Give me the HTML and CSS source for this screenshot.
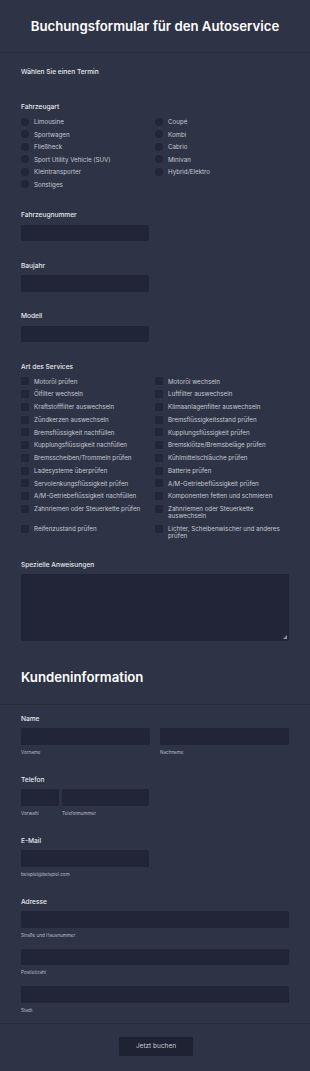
FILE: index.html
```html
<!DOCTYPE html>
<html lang="de">
<head>
<meta charset="utf-8">
<title>Buchungsformular für den Autoservice</title>
<link rel="stylesheet" href="styles.css">
</head>
<body>
<header class="page-header">
  <h1 class="title">Buchungsformular für den Autoservice</h1>
</header>
<main class="form">
  <section class="field first">
    <div class="label">Wählen Sie einen Termin</div>
  </section>

  <section class="field gap-lg">
    <div class="label">Fahrzeugart</div>
    <div class="choices">
      <label class="choice"><span class="radio"></span><span>Limousine</span></label>
      <label class="choice"><span class="radio"></span><span>Coupé</span></label>
      <label class="choice"><span class="radio"></span><span>Sportwagen</span></label>
      <label class="choice"><span class="radio"></span><span>Kombi</span></label>
      <label class="choice"><span class="radio"></span><span>Fließheck</span></label>
      <label class="choice"><span class="radio"></span><span>Cabrio</span></label>
      <label class="choice"><span class="radio"></span><span>Sport Utility Vehicle (SUV)</span></label>
      <label class="choice"><span class="radio"></span><span>Minivan</span></label>
      <label class="choice"><span class="radio"></span><span>Kleintransporter</span></label>
      <label class="choice"><span class="radio"></span><span>Hybrid/Elektro</span></label>
      <label class="choice"><span class="radio"></span><span>Sonstiges</span></label>
    </div>
  </section>

  <section class="field gap-md">
    <div class="label">Fahrzeugnummer</div>
    <div class="input half"></div>
  </section>

  <section class="field gap-md">
    <div class="label">Baujahr</div>
    <div class="input half"></div>
  </section>

  <section class="field gap-md">
    <div class="label">Modell</div>
    <div class="input half"></div>
  </section>

  <section class="field gap-md">
    <div class="label">Art des Services</div>
    <div class="choices checks">
      <label class="choice"><span class="check"></span><span>Motoröl prüfen</span></label>
      <label class="choice"><span class="check"></span><span>Motoröl wechseln</span></label>
      <label class="choice"><span class="check"></span><span>Ölfilter wechseln</span></label>
      <label class="choice"><span class="check"></span><span>Luftfilter auswechseln</span></label>
      <label class="choice"><span class="check"></span><span>Kraftstofffilter auswechseln</span></label>
      <label class="choice"><span class="check"></span><span>Klimaanlagenfilter auswechseln</span></label>
      <label class="choice"><span class="check"></span><span>Zündkerzen auswechseln</span></label>
      <label class="choice"><span class="check"></span><span>Bremsflüssigkeitsstand prüfen</span></label>
      <label class="choice"><span class="check"></span><span>Bremsflüssigkeit nachfüllen</span></label>
      <label class="choice"><span class="check"></span><span>Kupplungsflüssigkeit prüfen</span></label>
      <label class="choice"><span class="check"></span><span>Kupplungsflüssigkeit nachfüllen</span></label>
      <label class="choice"><span class="check"></span><span>Bremsklötze/Bremsbeläge prüfen</span></label>
      <label class="choice"><span class="check"></span><span>Bremsscheiben/Trommeln prüfen</span></label>
      <label class="choice"><span class="check"></span><span>Kühlmittelschläuche prüfen</span></label>
      <label class="choice"><span class="check"></span><span>Ladesysteme überprüfen</span></label>
      <label class="choice"><span class="check"></span><span>Batterie prüfen</span></label>
      <label class="choice"><span class="check"></span><span>Servolenkungsflüssigkeit prüfen</span></label>
      <label class="choice"><span class="check"></span><span>A/M-Getriebeflüssigkeit prüfen</span></label>
      <label class="choice"><span class="check"></span><span>A/M-Getriebeflüssigkeit nachfüllen</span></label>
      <label class="choice"><span class="check"></span><span>Komponenten fetten und schmieren</span></label>
      <label class="choice"><span class="check"></span><span>Zahnriemen oder Steuerkette prüfen</span></label>
      <label class="choice"><span class="check"></span><span>Zahnriemen oder Steuerkette auswechseln</span></label>
      <label class="choice"><span class="check"></span><span>Reifenzustand prüfen</span></label>
      <label class="choice"><span class="check"></span><span>Lichter, Scheibenwischer und anderes prüfen</span></label>
    </div>
  </section>

  <section class="field gap-notes">
    <div class="label">Spezielle Anweisungen</div>
    <div class="textarea">
      <svg class="grip" width="4" height="4" viewBox="0 0 4 4"><path d="M4 0 L4 4 L0 4 Z" fill="#8a90a0"/></svg>
    </div>
  </section>
</main>

<section class="subhead">
  <h2 class="subtitle">Kundeninformation</h2>
</section>

<main class="form">
  <section class="field name-field">
    <div class="label">Name</div>
    <div class="row two">
      <div class="col"><div class="input"></div><div class="sub">Vorname</div></div>
      <div class="col"><div class="input"></div><div class="sub">Nachname</div></div>
    </div>
  </section>

  <section class="field gap-sm">
    <div class="label">Telefon</div>
    <div class="row phone">
      <div class="col"><div class="input"></div><div class="sub">Vorwahl</div></div>
      <div class="col"><div class="input"></div><div class="sub">Telefonnummer</div></div>
    </div>
  </section>

  <section class="field gap-sm">
    <div class="label">E-Mail</div>
    <div class="input half"></div>
    <div class="sub">beispiel@beispiel.com</div>
  </section>

  <section class="field gap-sm">
    <div class="label">Adresse</div>
    <div class="input"></div>
    <div class="sub">Straße und Hausnummer</div>
    <div class="input next"></div>
    <div class="sub">Postleitzahl</div>
    <div class="input next"></div>
    <div class="sub">Stadt</div>
  </section>
</main>

<footer class="footer">
  <button class="submit" type="button">Jetzt buchen</button>
</footer>
</body>
</html>
```

FILE: styles.css
```css
* { box-sizing: border-box; }

html, body {
  margin: 0;
  padding: 0;
  background: #2e3345;
}

body {
  font-family: Inter, "Noto Sans", "Liberation Sans", sans-serif;
  color: #e4e7ee;
  width: 310px;
  min-height: 1071px;
}

.page-header {
  height: 53px;
  border-bottom: 1px solid #262b3a;
  display: flex;
  align-items: center;
  justify-content: center;
}

.title {
  margin: 0;
  font-size: 13.2px;
  font-weight: 600;
  color: #ffffff;
  line-height: 18px;
}

.form {
  padding: 0 21px;
  display: block;
}

.field { display: flex; flex-direction: column; }
.field.first { padding-top: 14.5px; }
.field.gap-lg { margin-top: 22px; }
.field.gap-md { margin-top: 20.5px; }
.field.gap-notes { margin-top: 18.5px; }
.field.gap-sm { margin-top: 20px; }
.field.name-field { margin-top: 9.5px; }

.label {
  font-size: 6.6px;
  line-height: 9px;
  font-weight: 500;
  color: #e6e9f0;
  margin-bottom: 4.5px;
}

.choices {
  display: grid;
  grid-template-columns: 134px 1fr;
  margin-top: -1px;
}

.choice {
  display: flex;
  align-items: flex-start;
  gap: 5px;
  padding: 2.5px 0 2.3px;
  font-size: 6.2px;
  line-height: 7.4px;
  color: #c7cad3;
}

.checks .choice { padding: 2.55px 0 2.5px; }

.choice span:last-child { display: block; }

.radio {
  flex: 0 0 8px;
  width: 8px;
  height: 8px;
  border-radius: 50%;
  background: #222638;
  margin-top: -0.3px;
}

.check {
  flex: 0 0 8px;
  width: 8px;
  height: 8px;
  border-radius: 1px;
  background: #222638;
  margin-top: -0.3px;
}

.input {
  height: 16.5px;
  background: #212537;
  border-radius: 1.5px;
}

.input.half { width: 128px; }
.input.next { margin-top: 10px; }

.textarea {
  position: relative;
  height: 67px;
  background: #212537;
  border-radius: 1.5px;
}

.grip {
  position: absolute;
  right: 2px;
  bottom: 2px;
}

.subhead {
  margin-top: 27px;
  padding: 0 21px 17px;
  border-bottom: 1px solid #262b3a;
}

.subtitle {
  margin: 0;
  font-size: 13.2px;
  line-height: 19px;
  font-weight: 600;
  color: #ffffff;
}

.row { display: flex; }
.row.two { gap: 10px; }
.row.two .col { flex: 1; }
.row.phone { gap: 3px; }
.row.phone .col:first-child { width: 38px; }
.row.phone .col:last-child { width: 87px; }

.sub {
  font-size: 4.6px;
  line-height: 6px;
  color: #b9bdc9;
  margin-top: 5px;
}

.footer {
  margin-top: 9.5px;
  border-top: 1px solid #262b3a;
  padding: 12.5px 0 0 2px;
  display: flex;
  justify-content: center;
}

.submit {
  width: 74px;
  height: 19.5px;
  border: none;
  border-radius: 1.5px;
  background: #1e2232;
  color: #c9cdd7;
  font-family: Inter, "Noto Sans", "Liberation Sans", sans-serif;
  font-size: 6.5px;
  padding: 0;
}
```
